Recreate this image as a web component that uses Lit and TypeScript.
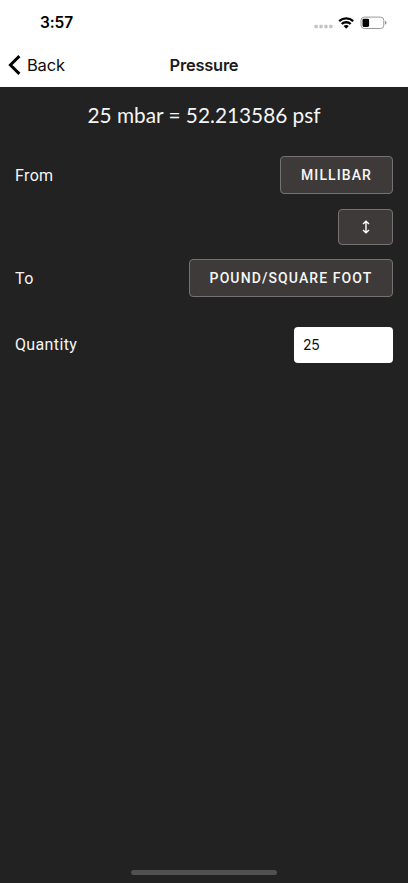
import { LitElement, html, css } from "lit";
import { customElement, state } from "lit/decorators.js";

@customElement("status-bar")
class StatusBar extends LitElement {
  static styles = css`
    :host {
      display: flex;
      height: 44px;
      box-sizing: border-box;
      padding: 2px 21px 0 40px;
      align-items: center;
      justify-content: space-between;
      color: #000;
    }
    .time {
      font: 600 15.5px/20px Inter, sans-serif;
      letter-spacing: -0.1px;
    }
    .icons {
      display: block;
    }
  `;
  render() {
    return html`
      <span class="time">3:57</span>
      <svg class="icons" width="73" height="16" viewBox="0 0 73 16">
        <g fill="#c4c4c4">
          <rect x="0.4" y="9.8" width="3.5" height="3.4" rx="1.2" />
          <rect x="5.3" y="9.8" width="3.5" height="3.4" rx="1.2" />
          <rect x="10.2" y="9.8" width="3.5" height="3.4" rx="1.2" />
          <rect x="15.1" y="9.8" width="3.5" height="3.4" rx="1.2" />
        </g>
        <g fill="none" stroke="#000" stroke-width="2.3">
          <path d="M25.2 6.1A10.4 10.4 0 0 1 39.2 6.1" />
          <path d="M27.7 9A6.6 6.6 0 0 1 36.7 9" />
        </g>
        <path d="M32.2 13.7L29.6 11.1A3.8 3.8 0 0 1 34.8 11.1Z" />
        <rect x="47" y="2.1" width="22.8" height="11.4" rx="3.3" fill="none" stroke="#999" />
        <rect x="48.5" y="3.7" width="6.6" height="8.2" rx="1.4" />
        <path d="M71.1 5.8Q72.5 6.4 72.5 7.8T71.1 9.8Z" fill="#888" />
      </svg>
    `;
  }
}

@customElement("nav-header")
class NavHeader extends LitElement {
  static styles = css`
    :host {
      display: grid;
      grid-template-columns: 1fr auto 1fr;
      align-items: center;
      height: 42px;
      padding: 0 8px;
      color: #0c0c0d;
      font: 400 16.5px/20px Inter, sans-serif;
    }
    .back {
      display: flex;
      align-items: center;
      gap: 6px;
      letter-spacing: -0.2px;
    }
    .title {
      color: #1c1c1e;
      font-weight: 600;
      font-size: 16.5px;
      letter-spacing: -0.25px;
    }
  `;
  render() {
    return html`
      <div class="back">
        <svg width="13" height="22" viewBox="0 0 13 22">
          <path d="M11.4 2.1L2.4 11L11.4 19.9" fill="none" stroke="#000" stroke-width="2.9" />
        </svg>
        <span>Back</span>
      </div>
      <div class="title">Pressure</div>
    `;
  }
}

@customElement("app-root")
class AppRoot extends LitElement {
  static styles = css`
    :host {
      display: flex;
      flex-direction: column;
      height: 100vh;
      background: #222;
      color: #f5f5f5;
      font-family: Roboto, sans-serif;
      overflow: hidden;
    }
    .top {
      height: 87px;
      background: #fff;
      flex: none;
    }
    .result {
      height: 56px;
      line-height: 56px;
      text-align: center;
      font-family: Lato, sans-serif;
      font-size: 20.8px;
      white-space: nowrap;
    }
    .form {
      display: flex;
      flex-direction: column;
      padding: 13px 15px 0;
      flex: 1;
    }
    .row {
      display: flex;
      justify-content: space-between;
      align-items: center;
      height: 38px;
      flex: none;
      font-size: 16px;
      letter-spacing: 0.36px;
    }
    .swap-row {
      height: 36px;
      margin: 15px 0 14px;
      justify-content: flex-end;
    }
    .qty-row {
      height: 36px;
      margin-top: 30px;
    }
    .qty-row span {
      padding-bottom: 2px;
    }
    .btn {
      box-sizing: border-box;
      height: 38px;
      border: 1px solid #767271;
      border-radius: 4px;
      background: #3e3a39;
      color: #f7f7f7;
      font: 500 14px/36px Roboto, sans-serif;
      letter-spacing: 1.1px;
      padding: 0;
      display: flex;
      align-items: center;
      justify-content: center;
      white-space: nowrap;
    }
    .from {
      width: 113px;
    }
    .to {
      width: 204px;
    }
    .swap {
      width: 55px;
      height: 36px;
    }
    .field {
      box-sizing: border-box;
      width: 99px;
      height: 36px;
      border: 0;
      border-radius: 4px;
      background: #fff;
      color: #111;
      padding: 0 8px 2px 9px;
      font: 400 14px/34px Inter, sans-serif;
      letter-spacing: -0.3px;
      outline: none;
    }
    .home {
      width: 146px;
      height: 5px;
      border-radius: 3px;
      background: #515151;
      margin: 0 auto 8px;
      flex: none;
    }
  `;

  @state() quantity = "25";

  render() {
    return html`
      <div class="top">
        <status-bar></status-bar>
        <nav-header></nav-header>
      </div>
      <div class="result">25 mbar = 52.213586 psf</div>
      <div class="form">
        <div class="row">
          <span>From</span>
          <button class="btn from">MILLIBAR</button>
        </div>
        <div class="row swap-row">
          <button class="btn swap" aria-label="Swap units">
            <svg width="8" height="14" viewBox="0 0 8 14" fill="none" stroke="#fff" stroke-width="1.4">
              <path d="M4 1.4V12.6M1 4L4 1.2L7 4M1 10L4 12.8L7 10" />
            </svg>
          </button>
        </div>
        <div class="row">
          <span>To</span>
          <button class="btn to">POUND/SQUARE FOOT</button>
        </div>
        <div class="row qty-row">
          <span>Quantity</span>
          <input class="field" .value=${this.quantity} />
        </div>
      </div>
      <div class="home"></div>
    `;
  }
}
